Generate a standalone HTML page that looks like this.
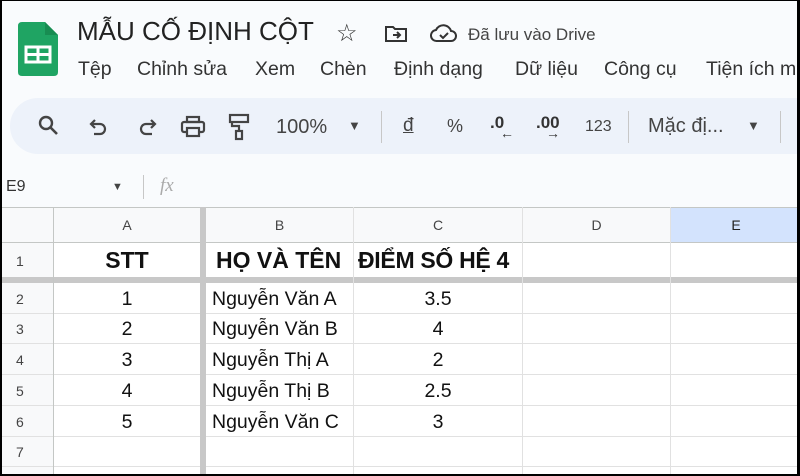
<!DOCTYPE html>
<html><head><meta charset="utf-8"><style>
*{margin:0;padding:0;box-sizing:border-box}
body{width:800px;height:476px;overflow:hidden;background:#000;font-family:"Liberation Sans",Arial,sans-serif}
#w{position:absolute;left:2px;top:1px;width:795px;height:473px;background:#f9fbfd;overflow:hidden}
.a{position:absolute;white-space:nowrap}
.m{position:absolute;top:57px;font-size:19.5px;color:#333;white-space:nowrap}
.t{position:absolute;font-size:19.5px;color:#111;white-space:nowrap}
</style></head><body><div id="w">
<svg class="a" style="left:16px;top:21px" width="40" height="54" viewBox="0 0 40 54"><path d="M4 0H27L40 13V50Q40 54 36 54H4Q0 54 0 50V4Q0 0 4 0Z" fill="#1fa463"/><path d="M27 0V13H40Z" fill="#188d52"/><rect x="8" y="25" width="24" height="15" fill="none" stroke="#fff" stroke-width="3"/><line x1="8" y1="32.5" x2="32" y2="32.5" stroke="#fff" stroke-width="3"/><line x1="20" y1="25" x2="20" y2="40" stroke="#fff" stroke-width="3"/></svg>
<div class="a" style="left:75px;top:15px;font-size:26px;color:#222">MẪU CỐ ĐỊNH CỘT</div>
<div class="a" style="left:334px;top:18px;font-size:24px;color:#333">☆</div>
<svg class="a" style="left:382px;top:24px" width="24" height="18" viewBox="0 0 24 18"><path d="M2 2H9L11 4H22V16H2Z" fill="none" stroke="#333" stroke-width="2"/><path d="M9 10H16M13 7L16 10L13 13" fill="none" stroke="#333" stroke-width="2"/></svg>
<svg class="a" style="left:428px;top:22px" width="28" height="20" viewBox="0 0 28 20"><path d="M7 18H21A5 5 0 0 0 21 8A8 8 0 0 0 6 7A5.5 5.5 0 0 0 7 18Z" fill="none" stroke="#333" stroke-width="2"/><path d="M10 12L13 15L18 10" fill="none" stroke="#333" stroke-width="2"/></svg>
<div class="a" style="left:466px;top:24px;font-size:17px;color:#444">Đã lưu vào Drive</div>
<div class="m" style="left:76px">Tệp</div>
<div class="m" style="left:135px">Chỉnh sửa</div>
<div class="m" style="left:253px">Xem</div>
<div class="m" style="left:318px">Chèn</div>
<div class="m" style="left:392px">Định dạng</div>
<div class="m" style="left:513px">Dữ liệu</div>
<div class="m" style="left:602px">Công cụ</div>
<div class="m" style="left:704px">Tiện ích mở</div>
<div class="a" style="left:8px;top:97px;width:820px;height:56px;border-radius:28px;background:#edf2fa"></div>
<svg class="a" style="left:36px;top:114px" width="22" height="22" viewBox="0 0 22 22"><circle cx="8" cy="8" r="6" fill="none" stroke="#444" stroke-width="2.4"/><path d="M12.5 12.5L19 19" stroke="#444" stroke-width="2.6"/></svg>
<svg class="a" style="left:86px;top:116px" width="22" height="22" viewBox="0 0 22 22"><path d="M7 3L3 7L7 11" fill="none" stroke="#444" stroke-width="2.2"/><path d="M3 7H12A5 5 0 0 1 12 17H6" fill="none" stroke="#444" stroke-width="2.2"/></svg>
<svg class="a" style="left:134px;top:116px" width="22" height="22" viewBox="0 0 22 22"><path d="M15 3L19 7L15 11" fill="none" stroke="#444" stroke-width="2.2"/><path d="M19 7H10A5 5 0 0 0 10 17H16" fill="none" stroke="#444" stroke-width="2.2"/></svg>
<svg class="a" style="left:178px;top:114px" width="26" height="24" viewBox="0 0 26 24"><rect x="7" y="2" width="12" height="5" fill="none" stroke="#444" stroke-width="2.2"/><rect x="2" y="7" width="22" height="10" rx="2" fill="none" stroke="#444" stroke-width="2.2"/><rect x="7" y="13" width="12" height="8" fill="#edf2fa" stroke="#444" stroke-width="2.2"/></svg>
<svg class="a" style="left:226px;top:112px" width="22" height="28" viewBox="0 0 22 28"><rect x="2" y="2" width="18" height="7" fill="none" stroke="#444" stroke-width="2.2"/><path d="M4 9V13H11V18" fill="none" stroke="#444" stroke-width="2.2"/><rect x="8" y="18" width="6" height="8" fill="none" stroke="#444" stroke-width="2.2"/></svg>
<div class="a" style="left:274px;top:115px;font-size:20px;color:#444">100%</div>
<div class="a" style="left:346px;top:117px;font-size:13px;color:#444">▼</div>
<div class="a" style="left:379px;top:110px;width:1px;height:32px;background:#c7c7c7"></div>
<div class="a" style="left:401px;top:114px;font-size:19px;color:#444;text-decoration:underline">đ</div>
<div class="a" style="left:445px;top:115px;font-size:18px;color:#444">%</div>
<div class="a" style="left:488px;top:112px;font-size:17px;color:#333;font-weight:bold">.0</div>
<div class="a" style="left:498px;top:124px;font-size:14px;color:#333">←</div>
<div class="a" style="left:534px;top:112px;font-size:17px;color:#333;font-weight:bold">.00</div>
<div class="a" style="left:544px;top:124px;font-size:14px;color:#333">→</div>
<div class="a" style="left:583px;top:117px;font-size:16px;color:#444">123</div>
<div class="a" style="left:626px;top:110px;width:1px;height:32px;background:#c7c7c7"></div>
<div class="a" style="left:646px;top:114px;font-size:20px;color:#444">Mặc đị...</div>
<div class="a" style="left:745px;top:117px;font-size:13px;color:#444">▼</div>
<div class="a" style="left:778px;top:110px;width:1px;height:32px;background:#c7c7c7"></div>
<div class="a" style="left:4px;top:177px;font-size:16px;color:#333">E9</div>
<div class="a" style="left:110px;top:180px;font-size:11px;color:#444">▼</div>
<div class="a" style="left:141px;top:174px;width:1px;height:24px;background:#c7c7c7"></div>
<div class="a" style="left:158px;top:174px;font-size:19px;color:#aaa;font-style:italic;font-family:'Liberation Serif',serif">fx</div>
<div class="a" style="left:0;top:206px;width:800px;height:270px;background:#fff"></div>
<div class="a" style="left:0;top:206px;width:800px;height:35px;background:#f8f9fa"></div>
<div class="a" style="left:0;top:206px;width:51px;height:270px;background:#f8f9fa"></div>
<div class="a" style="left:668px;top:206px;width:130px;height:35px;background:#d3e3fd"></div>
<div class="a" style="left:0;top:206px;width:800px;height:1px;background:#c4c7c5"></div>
<div class="a" style="left:0;top:241px;width:800px;height:1px;background:#c4c7c5"></div>
<div class="a" style="left:0;top:276px;width:800px;height:6px;background:#c8c8c8"></div>
<div class="a" style="left:0;top:312px;width:800px;height:1px;background:#e1e1e1"></div>
<div class="a" style="left:0;top:342px;width:800px;height:1px;background:#e1e1e1"></div>
<div class="a" style="left:0;top:373px;width:800px;height:1px;background:#e1e1e1"></div>
<div class="a" style="left:0;top:404px;width:800px;height:1px;background:#e1e1e1"></div>
<div class="a" style="left:0;top:435px;width:800px;height:1px;background:#e1e1e1"></div>
<div class="a" style="left:0;top:465px;width:800px;height:1px;background:#e1e1e1"></div>
<div class="a" style="left:51px;top:206px;width:1px;height:270px;background:#c4c7c5"></div>
<div class="a" style="left:198px;top:206px;width:6px;height:270px;background:#c8c8c8"></div>
<div class="a" style="left:351px;top:206px;width:1px;height:270px;background:#e1e1e1"></div>
<div class="a" style="left:520px;top:206px;width:1px;height:270px;background:#e1e1e1"></div>
<div class="a" style="left:668px;top:206px;width:1px;height:270px;background:#e1e1e1"></div>
<div class="a" style="left:52px;top:216px;width:146px;text-align:center;font-size:14px;color:#444">A</div>
<div class="a" style="left:204px;top:216px;width:147px;text-align:center;font-size:14px;color:#444">B</div>
<div class="a" style="left:352px;top:216px;width:168px;text-align:center;font-size:14px;color:#444">C</div>
<div class="a" style="left:521px;top:216px;width:147px;text-align:center;font-size:14px;color:#444">D</div>
<div class="a" style="left:669px;top:216px;width:130px;text-align:center;font-size:14px;color:#222">E</div>
<div class="a" style="left:14px;top:252px;font-size:14px;color:#444">1</div>
<div class="a" style="left:14px;top:290px;font-size:14px;color:#444">2</div>
<div class="a" style="left:14px;top:320px;font-size:14px;color:#444">3</div>
<div class="a" style="left:14px;top:351px;font-size:14px;color:#444">4</div>
<div class="a" style="left:14px;top:382px;font-size:14px;color:#444">5</div>
<div class="a" style="left:14px;top:413px;font-size:14px;color:#444">6</div>
<div class="a" style="left:14px;top:443px;font-size:14px;color:#444">7</div>
<div class="t" style="left:52px;top:246px;width:146px;text-align:center;font-size:23px;font-weight:bold">STT</div>
<div class="t" style="left:214px;top:246px;font-size:23px;font-weight:bold">HỌ VÀ TÊN</div>
<div class="t" style="left:356px;top:246px;font-size:23px;font-weight:bold;letter-spacing:-0.3px">ĐIỂM SỐ HỆ 4</div>
<div class="t" style="left:52px;top:287px;width:146px;text-align:center">1</div>
<div class="t" style="left:52px;top:317px;width:146px;text-align:center">2</div>
<div class="t" style="left:52px;top:348px;width:146px;text-align:center">3</div>
<div class="t" style="left:52px;top:379px;width:146px;text-align:center">4</div>
<div class="t" style="left:52px;top:410px;width:146px;text-align:center">5</div>
<div class="t" style="left:210px;top:287px">Nguyễn Văn A</div>
<div class="t" style="left:210px;top:317px">Nguyễn Văn B</div>
<div class="t" style="left:210px;top:348px">Nguyễn Thị A</div>
<div class="t" style="left:210px;top:379px">Nguyễn Thị B</div>
<div class="t" style="left:210px;top:410px">Nguyễn Văn C</div>
<div class="t" style="left:352px;top:287px;width:168px;text-align:center">3.5</div>
<div class="t" style="left:352px;top:317px;width:168px;text-align:center">4</div>
<div class="t" style="left:352px;top:348px;width:168px;text-align:center">2</div>
<div class="t" style="left:352px;top:379px;width:168px;text-align:center">2.5</div>
<div class="t" style="left:352px;top:410px;width:168px;text-align:center">3</div>
</div></body></html>
